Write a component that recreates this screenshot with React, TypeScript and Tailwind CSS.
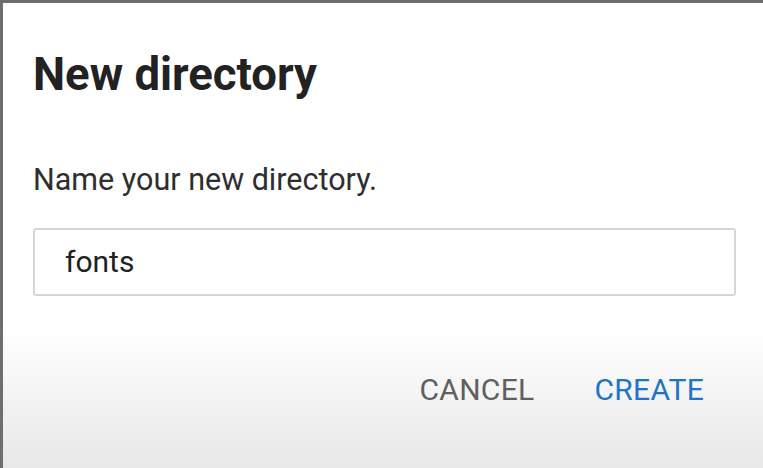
export default function App() {
  return (
    <div
      className="w-[763px] h-[468px] overflow-hidden border-t-[3px] border-l-[3px] border-[#6e6e6e] bg-linear-to-b from-white from-[70%] to-[#e8e8e8] flex flex-col"
      style={{ fontFamily: 'Roboto, "Noto Sans", sans-serif' }}
    >
      {/* Body */}
      <div className="pl-[30px] pr-[27px] pt-[46px] flex flex-col">
        <h1 className="text-[45.5px] leading-[52px] font-bold text-[#222222]">
          New directory
        </h1>
        <p className="mt-[61px] text-[30.5px] leading-[36px] text-[#2e2e2e]">
          Name your new directory.
        </p>
        <div className="mt-[30px] h-[68px] rounded-[3px] border-2 border-[#d6d6d6] bg-white flex items-center pl-[30px]">
          <input
            defaultValue="fonts"
            className="w-full bg-transparent outline-none text-[30px] leading-[36px] text-[#222222]"
          />
        </div>
      </div>

      {/* Actions */}
      <div className="mt-[76px] flex items-center justify-end gap-[60px] pr-[59px]">
        <button className="text-[30px] leading-[36px] text-[#5f5f5f] tracking-[0.3px]">
          CANCEL
        </button>
        <button className="text-[30px] leading-[36px] text-[#1f74c9] tracking-[0.3px]">
          CREATE
        </button>
      </div>
    </div>
  )
}
